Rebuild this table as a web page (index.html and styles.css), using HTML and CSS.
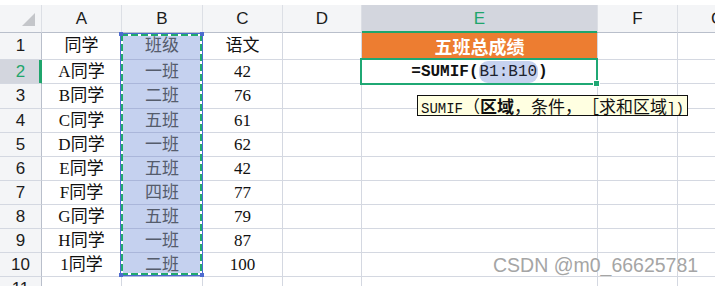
FILE: index.html
```html
<!DOCTYPE html>
<html>
<head>
	<title>成绩表</title>
	<link rel="stylesheet" href="styles.css">
</head>
<body>
	<div class="sheet">
		<table class="grid">
			<colgroup>
				<col class="c-idx"><col class="c-a"><col class="c-b"><col class="c-c"><col class="c-d"><col class="c-e"><col class="c-f"><col class="c-g">
			</colgroup>
			<thead>
				<tr class="hdr">
					<th class="corner"><svg width="13" height="13" viewBox="0 0 13 13"><polygon points="13,0 13,13 0,13" fill="#c4c6ca"/></svg></th>
					<th>A</th><th>B</th><th>C</th><th>D</th><th class="cur">E</th><th>F</th><th>G</th>
				</tr>
			</thead>
			<tbody>
				<tr class="r1"><th>1</th><td>同学</td><td class="pick">班级</td><td>语文</td><td></td><td class="title">五班总成绩</td><td></td><td></td></tr>
				<tr><th class="cur">2</th><td>A同学</td><td class="pick">一班</td><td>42</td><td></td><td class="formula">=SUMIF(<span class="ref">B1:B10</span>)</td><td></td><td></td></tr>
				<tr class="r3"><th>3</th><td>B同学</td><td class="pick">二班</td><td>76</td><td></td><td></td><td></td><td></td></tr>
				<tr><th>4</th><td>C同学</td><td class="pick">五班</td><td>61</td><td></td><td></td><td></td><td></td></tr>
				<tr><th>5</th><td>D同学</td><td class="pick">一班</td><td>62</td><td></td><td></td><td></td><td></td></tr>
				<tr><th>6</th><td>E同学</td><td class="pick">五班</td><td>42</td><td></td><td></td><td></td><td></td></tr>
				<tr><th>7</th><td>F同学</td><td class="pick">四班</td><td>77</td><td></td><td></td><td></td><td></td></tr>
				<tr><th>8</th><td>G同学</td><td class="pick">五班</td><td>79</td><td></td><td></td><td></td><td></td></tr>
				<tr><th>9</th><td>H同学</td><td class="pick">一班</td><td>87</td><td></td><td></td><td></td><td></td></tr>
				<tr><th>10</th><td>1同学</td><td class="pick">二班</td><td>100</td><td></td><td></td><td></td><td></td></tr>
				<tr><th>11</th><td></td><td></td><td></td><td></td><td></td><td></td><td></td></tr>
			</tbody>
		</table>

		<!-- copy range on B1:B10 -->
		<div class="marquee"></div>
		<!-- active cell E2 -->
		<div class="active"></div>

		<div class="tip"><span class="lat">SUMIF</span>（<b>区域</b>，条件，［求和区域<span class="lat">])</span></div>

		<div class="mark">CSDN @m0_66625781</div>
	</div>
</body>
</html>
```

FILE: styles.css
```css
body {
	margin: 0;
	background: #fff;
	font-family: "Liberation Serif", "Noto Sans CJK SC", serif;
	text-spacing-trim: space-all;
}

.sheet {
	position: relative;
	width: 715px;
	height: 286px;
	padding-top: 5px;
	box-sizing: border-box;
	overflow: hidden;
}

.grid {
	table-layout: fixed;
	border-collapse: separate;
	border-spacing: 0;
	width: 758px;
}
.c-idx { width: 42px; }
.c-a { width: 80px; }
.c-b { width: 81px; }
.c-c { width: 80px; }
.c-d { width: 79px; }
.c-e { width: 236px; }
.c-f { width: 80px; }
.c-g { width: 80px; }

.grid th,
.grid td {
	padding: 0;
	border-right: 1px solid #d4d8e1;
	border-bottom: 1px solid #d4d8e1;
	text-align: center;
	vertical-align: middle;
	white-space: nowrap;
	overflow: hidden;
	line-height: 20px;
	font-size: 17px;
	color: #111;
}

.grid th {
	font-family: "Liberation Sans", "Noto Sans CJK SC", sans-serif;
	font-weight: normal;
	background: #f4f5f7;
	color: #1c1c1c;
}
.grid thead th {
	border-bottom-color: #b9bfcb;
	border-right-color: #dcdfe5;
}
.grid tbody th {
	border-right-color: #b9bfcb;
}

.hdr { height: 28px; }
tbody tr { height: 24px; }
tbody tr.r1 { height: 27px; }
tbody tr.r3 { height: 25px; }

.corner {
	text-align: right !important;
	vertical-align: bottom !important;
	padding: 0 6px 6px 0 !important;
}
.corner svg {
	display: block;
	margin-left: auto;
}

.grid thead th.cur {
	background: #d3d6de;
	color: #1fa56c;
	border-bottom-color: #1fa56c;
	box-shadow: inset 0 -1px #1fa56c;
}
.grid tbody th.cur {
	background: #d3d6de;
	color: #1fa56c;
	border-right-color: #1fa56c;
	box-shadow: inset -2px 0 #1fa56c;
}

.grid td.pick {
	background: #c5d1ef;
	color: #555c6c;
	border-bottom-color: #aab6da;
}

.grid td.title {
	background: #ed7d31;
	color: #fff;
	font-family: "Noto Sans CJK SC", sans-serif;
	font-weight: bold;
	font-size: 18px;
	border-bottom-color: #ed7d31;
}

.grid td.formula {
	font-family: "Liberation Mono", monospace;
	font-weight: bold;
	font-size: 16px;
	color: #111;
}
.ref {
	font-weight: normal;
	background: #c6d2ef;
	border-radius: 9px;
	padding: 2px 1px;
	color: #1d2230;
}

/* dashed copy frame: blue outline, green/white dashes inside */
.marquee {
	position: absolute;
	left: 120px;
	top: 33px;
	width: 83px;
	height: 243px;
	box-sizing: border-box;
	border: 1px solid #4d6bd0;
}
.marquee::before {
	content: "";
	position: absolute;
	inset: 0;
	background:
		repeating-linear-gradient(90deg, #22aa6e 0 7px, #fff 7px 10px) top left / 100% 2px no-repeat,
		repeating-linear-gradient(90deg, #22aa6e 0 7px, #fff 7px 10px) bottom left / 100% 2px no-repeat,
		repeating-linear-gradient(180deg, #22aa6e 0 7px, #fff 7px 10px) top left / 2px 100% no-repeat,
		repeating-linear-gradient(180deg, #22aa6e 0 7px, #fff 7px 10px) top right / 2px 100% no-repeat;
}
.marquee::after {
	content: "";
	position: absolute;
	left: -2px;
	top: -2px;
	right: -2px;
	bottom: -2px;
	background:
		linear-gradient(#4d6bd0, #4d6bd0) top left / 4px 4px no-repeat,
		linear-gradient(#4d6bd0, #4d6bd0) top right / 4px 4px no-repeat,
		linear-gradient(#4d6bd0, #4d6bd0) bottom left / 4px 4px no-repeat,
		linear-gradient(#4d6bd0, #4d6bd0) bottom right / 4px 4px no-repeat;
}

.active {
	position: absolute;
	left: 360px;
	top: 58px;
	width: 238px;
	height: 27px;
	box-sizing: border-box;
	border: 2px solid #1fa874;
}
.active::after {
	content: "";
	position: absolute;
	right: -4px;
	bottom: -4px;
	width: 5px;
	height: 5px;
	background: #1fa874;
	border: 1px solid #fff;
}

.tip {
	position: absolute;
	left: 417px;
	top: 95px;
	height: 21px;
	box-sizing: border-box;
	padding: 0 3px;
	border: 1px solid #111;
	background: #ffffe1;
	font-family: "Noto Sans CJK SC", sans-serif;
	font-size: 17px;
	line-height: 19px;
	color: #111;
	white-space: nowrap;
}
.tip b {
	font-weight: bold;
}
.tip .lat {
	font-family: "Liberation Mono", monospace;
	font-size: 14px;
}

.mark {
	position: absolute;
	left: 493px;
	top: 255px;
	font-family: "Liberation Sans", sans-serif;
	font-size: 19.5px;
	line-height: 20px;
	color: #a5a5a5;
	text-shadow: 0 0 1px #fff, 0 0 1px #fff;
	white-space: nowrap;
}
```
